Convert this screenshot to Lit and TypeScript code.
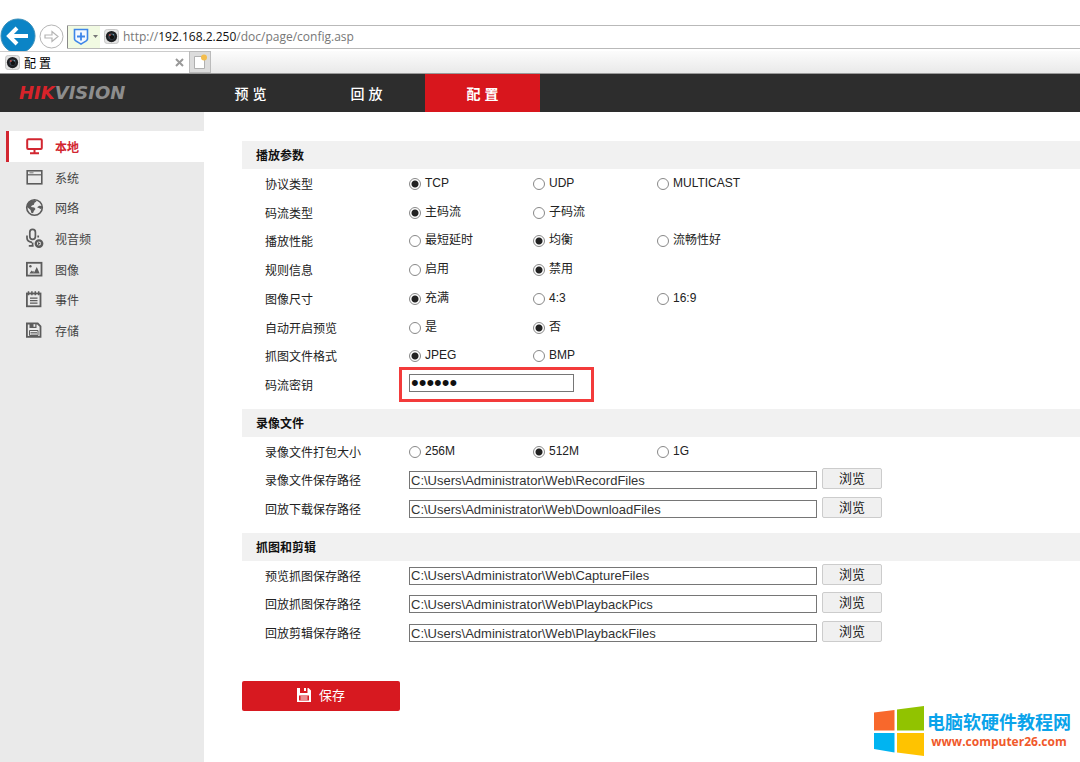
import { LitElement, html, svg, css, nothing } from "lit";
import { customElement, state } from "lit/decorators.js";
import { classMap } from "lit/directives/class-map.js";

interface RadioRow {
  kind: "radio";
  id: string;
  label: string;
  options: string[];
  selected: number;
}
interface PathRow {
  kind: "path";
  id: string;
  label: string;
  value: string;
}
interface SecretRow {
  kind: "secret";
  id: string;
  label: string;
  value: string;
}
type Row = RadioRow | PathRow | SecretRow;

const radio = (id: string, label: string, options: string[], selected: number): RadioRow => ({
  kind: "radio",
  id,
  label,
  options,
  selected,
});
const path = (id: string, label: string, folder: string): PathRow => ({
  kind: "path",
  id,
  label,
  value: "C:\\Users\\Administrator\\Web\\" + folder,
});

const SECTIONS: { title: string; size: string; rows: Row[] }[] = [
  {
    title: "播放参数",
    size: "tall",
    rows: [
      radio("protocol", "协议类型", ["TCP", "UDP", "MULTICAST"], 0),
      radio("stream", "码流类型", ["主码流", "子码流"], 0),
      radio("perf", "播放性能", ["最短延时", "均衡", "流畅性好"], 1),
      radio("rules", "规则信息", ["启用", "禁用"], 1),
      radio("ratio", "图像尺寸", ["充满", "4:3", "16:9"], 0),
      radio("auto", "自动开启预览", ["是", "否"], 1),
      radio("format", "抓图文件格式", ["JPEG", "BMP"], 0),
      { kind: "secret", id: "secret", label: "码流密钥", value: "123456" },
    ],
  },
  {
    title: "录像文件",
    size: "short",
    rows: [
      radio("pack", "录像文件打包大小", ["256M", "512M", "1G"], 1),
      path("record", "录像文件保存路径", "RecordFiles"),
      path("download", "回放下载保存路径", "DownloadFiles"),
    ],
  },
  {
    title: "抓图和剪辑",
    size: "short",
    rows: [
      path("capture", "预览抓图保存路径", "CaptureFiles"),
      path("pics", "回放抓图保存路径", "PlaybackPics"),
      path("clips", "回放剪辑保存路径", "PlaybackFiles"),
    ],
  },
];

const MENU = [
  {
    label: "本地",
    icon: svg`<rect x="1.2" y="1.2" width="14.6" height="9.8" rx="1" fill="none" stroke="currentColor" stroke-width="2"/>
      <path d="M8.500 11v3.500M4 15.200h9" fill="none" stroke="currentColor" stroke-width="2"/>`,
  },
  {
    label: "系统",
    icon: svg`<rect x="1.2" y="1.8" width="14.6" height="13" fill="none" stroke="currentColor" stroke-width="1.6"/>
      <path d="M2 5.8h13" stroke="currentColor" stroke-width="1.2"/><path d="M3.5 3.8h4" stroke="currentColor" stroke-width=".8"/>`,
  },
  {
    label: "网络",
    icon: svg`<circle cx="8.5" cy="8.5" r="7.8" fill="none" stroke="currentColor" stroke-width="1.6"/>
      <path d="M1.500 5 4.500 1.800l4.500-.8 1.500 1.500-2 1.200-.6 2-2 .8-1 1.600 3.400.4 1.200 1.600-1.600 2-.9 2.200-1.800-.6-.6-2.600-2.600-2.400-1.400-.6z" fill="currentColor"/>
      <path d="m11.500 8 1.700-1.200 3 .2-.4 2.400-1.800.6-.8-1-1.700-.2z" fill="currentColor"/>`,
  },
  {
    label: "视音频",
    icon: svg`<rect x="3.8" y="-.6" width="5.600" height="10" rx="2.800" fill="none" stroke="currentColor" stroke-width="1.700"/>
      <path d="M1 5.500v2.600c0 2.600 2 4 5 4.200M12.200 5.500v2M6.600 12.500v3M2.800 15.800h4.800" fill="none" stroke="currentColor" stroke-width="1.700"/>
      <circle cx="13" cy="13.600" r="3.200" fill="none" stroke="currentColor" stroke-width="2.400"/>
      <path d="m12 12 2.600 1.600-2.600 1.600z" fill="currentColor"/>`,
  },
  {
    label: "图像",
    icon: svg`<rect x=".9" y="1.800" width="14.600" height="12.800" fill="none" stroke="currentColor" stroke-width="1.800"/>
      <circle cx="4.400" cy="5.200" r="1.200" fill="currentColor"/>
      <path d="m3.400 12.400 2.200-3 1.400 1.400.8-1v2.600zM7.600 12.400l3.200-6.400 2.900 6.400z" fill="currentColor"/>`,
  },
  {
    label: "事件",
    icon: svg`<rect x=".9" y="2.500" width="13.600" height="12.800" fill="none" stroke="currentColor" stroke-width="1.800"/>
      <path d="M2.500.2v4M5.900.2v4M9.300.2v4M12.700.2v4" stroke="currentColor" stroke-width="1.500"/>
      <path d="M4 7.200h7.500M4 9.700h7.500M4 12.200h7.500" stroke="currentColor" stroke-width="1.200"/>`,
  },
  {
    label: "存储",
    icon: svg`<path d="M.9 1.500h10.800l2.800 2.800v10.500H.9z" fill="none" stroke="currentColor" stroke-width="1.800"/>
      <path d="M3.500 1.500h7v4.500h-7z" fill="currentColor"/>
      <path d="M7.500 2.200h1.800v2.600H7.500z" class="hole"/>
      <path d="M3.500 8.500h8.500v5H3.500z" fill="none" stroke="currentColor" stroke-width="1"/>
      <path d="M4.500 10.500h6.500M4.500 12h6.500" stroke="currentColor" stroke-width=".8"/>`,
  },
];

const camera = html`<svg class="cam" viewBox="0 0 16 16" aria-hidden="true">
  <rect x=".5" y=".5" width="15" height="15" rx="3" fill="#e4e4e4" stroke="#c4c4c4" />
  <circle cx="8" cy="8" r="6" fill="#1d1f22" />
  <circle cx="8" cy="8" r="3.500" fill="#3a4450" />
  <circle cx="8.500" cy="8.400" r="2.400" fill="#111" />
  <circle cx="6.200" cy="6.400" r="1.100" fill="#b8504c" />
  <circle cx="10" cy="6" r=".8" fill="#6a9fb0" />
</svg>`;

@customElement("browser-bar")
export class BrowserBar extends LitElement {
  static styles = css`
    :host {
      display: block;
      font-family: "Open Sans", "Noto Sans CJK SC", sans-serif;
      background: #fff;
    }
    button {
      border: 0;
      padding: 0;
      background: none;
      display: block;
    }
    svg {
      display: block;
    }
    .bar {
      display: flex;
      align-items: center;
      padding-top: 18px;
      height: 33px;
      overflow: hidden;
    }
    .back,
    .back svg {
      width: 36px;
      height: 36px;
    }
    .back {
      flex: none;
      align-self: flex-start;
    }
    .forward {
      flex: none;
      margin: 4px 3px 0;
    }
    .forward svg {
      width: 25px;
      height: 25px;
    }
    .address {
      flex: 1;
      display: flex;
      align-items: center;
      height: 22px;
      margin-top: 4px;
      border-top: 1px solid #b9b9b9;
      border-bottom: 1px solid #b9b9b9;
      font-size: 12px;
      line-height: 24px;
      color: #777;
    }
    .address b {
      font-weight: 400;
      color: #111;
    }
    .shield {
      display: flex;
      align-items: center;
      gap: 4px;
      width: 33px;
      height: 22px;
      box-sizing: border-box;
      padding-left: 5px;
      background: #f1fae2;
      border-left: 1px solid #888;
      margin-right: 4px;
    }
    .cam {
      width: 15px;
      height: 15px;
      flex: none;
    }
    .url {
      margin-left: 4px;
      padding-top: 1px;
    }
    .tabs {
      display: flex;
      height: 22px;
      border-bottom: 1px solid #999;
      background: linear-gradient(#fcfcfc, #e9e9e9);
    }
    .tab {
      display: flex;
      align-items: center;
      gap: 4px;
      width: 189px;
      box-sizing: border-box;
      padding: 0 5px;
      background: #fff;
      border-top: 1px solid #ccc;
      font-size: 12px;
      color: #000;
    }
    .title {
      flex: 1;
    }
    .new {
      width: 22px;
      box-sizing: border-box;
      border: 1px solid #bbb;
      background: #dcdcdc;
      padding-left: 2px;
    }
  `;

  render() {
    return html`
      <div class="bar">
        <button class="back" aria-label="后退">
          <svg viewBox="0 0 36 36">
            <circle cx="18" cy="18" r="17" fill="#0b84c6" stroke="#3b8fb9" />
            <path d="M28 18H10M17 10l-8 8 8 8" fill="none" stroke="#fff" stroke-width="4" />
          </svg>
        </button>
        <button class="forward" aria-label="前进">
          <svg viewBox="0 0 25 25">
            <circle cx="12.5" cy="12.5" r="11.500" fill="#fff" stroke="#b5b5b5" />
            <path d="M6 11h7V7.500l6 5-6 5V14H6z" fill="#fff" stroke="#b5b5b5" stroke-width="1.200" />
          </svg>
        </button>
        <div class="address">
          <button class="shield" aria-label="安全">
            <svg width="16" height="17" viewBox="0 0 16 17">
              <path d="M1.500 1.500h13v9.500c0 2-3.500 3-6.500 5-3-2-6.500-3-6.500-5z" fill="#f3f8ff" stroke="#3d86e8" stroke-width="1.600" />
              <path d="M8 4.500v8M4 8.500h8" stroke="#3d86e8" stroke-width="1.800" />
            </svg>
            <svg width="5" height="3" viewBox="0 0 5 3"><path d="M0 0h5L2.500 3z" fill="#777" /></svg>
          </button>
          ${camera}
          <span class="url">http://<b>192.168.2.250</b>/doc/page/config.asp</span>
        </div>
      </div>
      <div class="tabs">
        <div class="tab">
          ${camera}<span class="title">配 置</span>
          <button aria-label="关闭">
            <svg width="9" height="9" viewBox="0 0 9 9">
              <path d="m1 1 7 7M8 1 1 8" stroke="#999" stroke-width="2" />
            </svg>
          </button>
        </div>
        <button class="new" aria-label="新标签页">
          <svg width="16" height="18" viewBox="0 0 16 18">
            <path d="M2.500 3.500h10v12h-10z" fill="#fff" stroke="#b0b0b0" />
            <circle cx="12" cy="4.500" r="3" fill="#f3bd4e" />
          </svg>
        </button>
      </div>
    `;
  }
}

@customElement("config-form")
export class ConfigForm extends LitElement {
  static styles = css`
    :host {
      display: block;
      flex: 1;
      min-width: 0;
      padding: 29px 0 48px 38px;
      color: #222;
      font-size: 12px;
    }
    h2 {
      margin: 0;
      padding-left: 14px;
      height: 28px;
      line-height: 30px;
      background: #f1f1f1;
      font-size: 12px;
      font-weight: 700;
      color: #111;
    }
    .rows {
      display: grid;
      grid-auto-rows: 1fr;
      margin-bottom: 10px;
    }
    .tall {
      min-height: 230px;
    }
    .short {
      min-height: 86px;
    }
    .row {
      display: grid;
      grid-template-columns: 144px 1fr;
      align-items: center;
      padding-left: 23px;
    }
    .options {
      display: grid;
      grid-template-columns: repeat(3, 124px);
    }
    .option {
      display: flex;
      align-items: center;
      gap: 4px;
      line-height: 17px;
    }
    .option input {
      appearance: none;
      flex: none;
      box-sizing: border-box;
      width: 12px;
      height: 12px;
      margin: 1px 0 0;
      border: 1px solid #888;
      border-radius: 50%;
      background: #fff;
    }
    .option input:checked {
      background: radial-gradient(circle, #222 3px, #fff 4px);
    }
    .text {
      box-sizing: border-box;
      height: 18px;
      margin: 1px 0 0;
      padding: 0 1px;
      border: 1px solid #767676;
      border-radius: 0;
      background: #fff;
      color: #333;
      font: 13px "Liberation Sans", sans-serif;
      outline: 0;
    }
    .file {
      display: flex;
      align-items: center;
      gap: 5px;
    }
    .file .text {
      flex: 0 1 408px;
      min-width: 0;
    }
    .browse {
      width: 60px;
      height: 21px;
      margin-bottom: 2px;
      padding: 0;
      border: 1px solid #ccc;
      border-radius: 2px;
      background: #f0f0f0;
      color: #222;
      font: inherit;
      font-size: 13px;
      line-height: 19px;
    }
    .marked {
      position: relative;
      display: flex;
      justify-self: start;
      margin-bottom: 3px;
    }
    .marked .text {
      width: 165px;
      margin: 0;
      color: #111;
      font-size: 22px;
    }
    .ring {
      position: absolute;
      inset: -7px -20px -10px -10px;
      border: 3px solid #f33b3b;
      pointer-events: none;
    }
    .save {
      display: flex;
      align-items: center;
      justify-content: center;
      gap: 8px;
      width: 158px;
      height: 30px;
      margin-top: 34px;
      padding: 0 0 3px;
      border: 0;
      border-radius: 2px;
      background: #d71920;
      color: #fff;
      font: inherit;
      font-size: 13px;
    }
    .save svg {
      width: 14px;
      height: 14px;
    }
  `;

  private control(row: Row) {
    if (row.kind === "radio") {
      return html`<div class="options" role="radiogroup" aria-labelledby=${row.id}>
        ${row.options.map(
          (text, i) => html`<label class="option">
            <input type="radio" name=${row.id + "-choice"} .checked=${i === row.selected} />${text}
          </label>`
        )}
      </div>`;
    }
    if (row.kind === "secret") {
      return html`<div class="marked">
        <input class="text" id=${row.id} type="password" .value=${row.value} />
        <span class="ring"></span>
      </div>`;
    }
    return html`<div class="file">
      <input class="text" id=${row.id} type="text" .value=${row.value} />
      <button class="browse" type="button">浏览</button>
    </div>`;
  }

  render() {
    return html`<form @submit=${(e: Event) => e.preventDefault()}>
      ${SECTIONS.map(
        (s) => html`<section>
          <h2>${s.title}</h2>
          <div class=${classMap({ rows: true, [s.size]: true })}>
            ${s.rows.map(
              (row) => html`<div class="row">
                ${row.kind === "radio"
                  ? html`<span id=${row.id}>${row.label}</span>`
                  : html`<label for=${row.id}>${row.label}</label>`}
                ${this.control(row)}
              </div>`
            )}
          </div>
        </section>`
      )}
      <button class="save" type="submit">
        <svg viewBox="0 0 14 14" aria-hidden="true">
          <path
            fill="currentColor"
            fill-rule="evenodd"
            d="M0 0h11.500L14 2.500V14H0zM3 0v5h7.500V0H9v3H7V0zM2 7.500V12.500h10V7.500zM3.500 8.500h7v1h-7zM3.500 10.500h7v1h-7z"
          /></svg
        >保存
      </button>
    </form>`;
  }
}

@customElement("app-root")
export class AppRoot extends LitElement {
  static styles = css`
    :host {
      display: flex;
      flex-direction: column;
      position: relative;
      min-height: 100vh;
      background: #fff;
      font-family: "Liberation Sans", "Noto Sans CJK SC", sans-serif;
    }
    a {
      color: inherit;
      text-decoration: none;
    }
    .top {
      display: flex;
      height: 38px;
      background: #2d2d2d;
      color: #fff;
    }
    .logo {
      box-sizing: border-box;
      width: 193px;
      padding-left: 19px;
      font: italic 700 18px/38px "DejaVu Sans", sans-serif;
      color: #d8232a;
    }
    .logo span {
      color: #8d8d8d;
    }
    .nav {
      display: flex;
      gap: 1px;
    }
    .nav a {
      width: 115px;
      line-height: 40px;
      text-align: center;
      font-size: 14px;
      font-weight: 500;
    }
    .nav .on {
      background: #d8161d;
      font-weight: 700;
    }
    .main {
      flex: 1;
      display: flex;
    }
    .side {
      flex: none;
      width: 204px;
      padding-top: 19px;
      background: #eaeaea;
    }
    .menu {
      display: grid;
      grid-auto-rows: 1fr;
      min-height: 215px;
      margin: 0;
      padding: 0 0 0 6px;
      list-style: none;
    }
    .item {
      display: flex;
      align-items: center;
      gap: 12px;
      height: 100%;
      box-sizing: border-box;
      padding-left: 17px;
      border-left: 3px solid transparent;
      font-size: 12px;
      color: #444;
    }
    .item svg {
      width: 17px;
      height: 17px;
      color: #5c5c5c;
      overflow: visible;
    }
    .item.on,
    .item.on svg {
      color: #d22630;
    }
    .item.on {
      background: #fff;
      border-color: #d22630;
      font-weight: 700;
    }
    .hole {
      fill: #eaeaea;
    }
    .mark {
      position: absolute;
      right: 9px;
      bottom: 6px;
      display: flex;
      align-items: center;
      gap: 3px;
      text-align: center;
    }
    .mark svg {
      width: 50px;
      height: 50px;
    }
    .name {
      display: block;
      font-size: 18px;
      line-height: 22px;
      font-weight: 700;
      color: #0aa3ea;
    }
    .site {
      display: block;
      font: 700 12px/16px "Open Sans", sans-serif;
      color: #f0592b;
    }
  `;

  @state() private active = 0;

  render() {
    return html`
      <browser-bar></browser-bar>
      <header class="top">
        <div class="logo">HIK<span>VISION</span></div>
        <nav class="nav">
          <a href="#preview">预 览</a>
          <a href="#playback">回 放</a>
          <a class="on" href="#config" aria-current="page">配 置</a>
        </nav>
      </header>
      <div class="main">
        <nav class="side">
          <ul class="menu">
            ${MENU.map(
              (m, i) => html`<li>
                <a
                  class=${classMap({ item: true, on: i === this.active })}
                  href="#"
                  aria-current=${i === this.active ? "true" : nothing}
                  @click=${() => (this.active = i)}
                >
                  <svg viewBox="0 0 17 17" aria-hidden="true">${m.icon}</svg>${m.label}
                </a>
              </li>`
            )}
          </ul>
        </nav>
        <config-form></config-form>
      </div>
      <a class="mark" href="#site">
        <svg viewBox="0 0 50 50" aria-hidden="true">
          <path d="M0 6.500 20.500 4v20.500H0z" fill="#f8682c" />
          <path d="M23 3.500 50 0v24.500H23z" fill="#91c300" />
          <path d="M0 27h20.500v19.500L0 43z" fill="#00b4f1" />
          <path d="M23 27h27v23l-27-3.500z" fill="#ffc300" />
        </svg>
        <span>
          <span class="name">电脑软硬件教程网</span>
          <span class="site">www.computer26.com</span>
        </span>
      </a>
    `;
  }
}
